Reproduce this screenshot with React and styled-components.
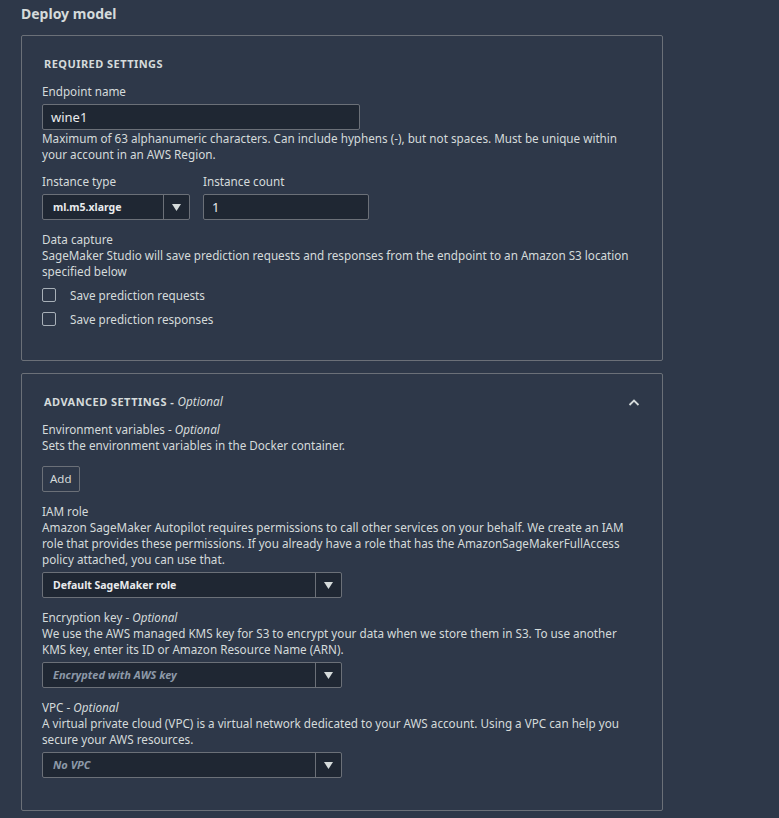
import React from "react";
import styled, { createGlobalStyle } from "styled-components";

const Global = createGlobalStyle`
  html, body { margin: 0; padding: 0; background: #2e3849; }
  body { font-family: "Noto Sans", "Open Sans", sans-serif; color: #d5dbdb; }
  * { box-sizing: border-box; }
`;

const Page = styled.div`
  padding: 4px 116px 8px 21px;
  min-height: 818px;
  background: #2e3849;
`;

const Title = styled.h1`
  margin: 0 0 11px;
  font-size: 14px;
  font-weight: 700;
  line-height: 20px;
  color: #d5dbdb;
`;

const Panel = styled.section`
  border: 1px solid #6b7078;
  border-radius: 2px;
  padding: 17px 20px ${(p) => p.$pb ?? 32}px 20px;
  margin-bottom: 12px;
  display: flex;
  flex-direction: column;
`;

const PanelHeader = styled.div`
  display: flex;
  align-items: center;
  justify-content: space-between;
  padding-left: 2px;
  margin-bottom: 10px;
  height: 20px;
`;

const PanelTitle = styled.h2`
  margin: 0;
  font-size: 11px;
  font-weight: 700;
  letter-spacing: 0.45px;
  text-transform: uppercase;
  color: #d5dbdb;
  em {
    font-size: 11.7px;
    font-weight: 400;
    text-transform: none;
    font-style: italic;
    letter-spacing: 0;
  }
`;

const Chevron = styled.svg`
  width: 12px;
  height: 12px;
  margin-right: 2px;
  margin-top: 3px;
`;

const Field = styled.div`
  display: flex;
  flex-direction: column;
  margin-bottom: ${(p) => p.$mb ?? 11}px;
`;

const Label = styled.div`
  font-size: 11.7px;
  line-height: 16px;
  color: #d5dbdb;
  em { font-style: italic; }
`;

const Help = styled.div`
  font-size: 11.7px;
  line-height: 16px;
  color: #d5dbdb;
`;

const TextInput = styled.div`
  width: ${(p) => p.$w}px;
  height: 26px;
  margin-top: 5px;
  background: #1f2733;
  border: 1px solid #6b7078;
  border-radius: 2px;
  padding: 0 8px;
  display: flex;
  align-items: center;
  font-size: 13px;
  line-height: 16px;
  color: #e9ebed;
`;

const Select = styled.div`
  width: ${(p) => p.$w}px;
  height: 26px;
  margin-top: 5px;
  background: #1f2733;
  border: 1px solid #6b7078;
  border-radius: 2px;
  display: flex;
  align-items: stretch;
`;

const SelectValue = styled.div`
  flex: 1;
  display: flex;
  align-items: center;
  padding-left: 10px;
  font-size: ${(p) => (p.$placeholder ? "11px" : "10.5px")};
  line-height: 16px;
  font-weight: 700;
  font-style: ${(p) => (p.$placeholder ? "italic" : "normal")};
  color: ${(p) => (p.$placeholder ? "#8d99a8" : "#e9ebed")};
`;

const SelectArrow = styled.div`
  width: 26px;
  border-left: 1px solid #6b7078;
  display: flex;
  align-items: center;
  justify-content: center;
`;

const Row = styled.div`
  display: flex;
  gap: 13px;
  margin-bottom: 11px;
`;

const CheckRow = styled.label`
  display: flex;
  align-items: center;
  gap: 14px;
  height: 16px;
  margin-top: 8px;
  font-size: 11.7px;
  line-height: 16px;
  color: #d5dbdb;
`;

const Box = styled.span`
  width: 14px;
  height: 14px;
  border: 1px solid #a8b0b8;
  border-radius: 2px;
  display: inline-block;
`;

const Button = styled.button`
  align-self: flex-start;
  height: 26px;
  margin-top: 13px;
  padding: 0 7px;
  background: transparent;
  border: 1px solid #6b7078;
  border-radius: 2px;
  color: #d5dbdb;
  font-family: inherit;
  font-size: 11.5px;
  line-height: 16px;
`;

const Arrow = () => (
  <svg width="9" height="7" viewBox="0 0 9 7">
    <path d="M0 0 H9 L4.5 7 Z" fill="#d5dbdb" />
  </svg>
);

export default function App() {
  return (
    <>
      <Global />
      <Page>
        <Title>Deploy model</Title>
        <Panel $pb={33}>
          <PanelHeader>
            <PanelTitle>Required settings</PanelTitle>
          </PanelHeader>
          <Field>
            <Label>Endpoint name</Label>
            <TextInput $w={318}>wine1</TextInput>
            <Help>
              Maximum of 63 alphanumeric characters. Can include hyphens (-), but not spaces. Must be unique within your account in an AWS Region.
            </Help>
          </Field>
          <Row>
            <Field $mb={0}>
              <Label>Instance type</Label>
              <Select $w={148}>
                <SelectValue>ml.m5.xlarge</SelectValue>
                <SelectArrow><Arrow /></SelectArrow>
              </Select>
            </Field>
            <Field $mb={0}>
              <Label>Instance count</Label>
              <TextInput $w={166}>1</TextInput>
            </Field>
          </Row>
          <Field $mb={0}>
            <Label>Data capture</Label>
            <Help>
              SageMaker Studio will save prediction requests and responses from the endpoint to an Amazon S3 location specified below
            </Help>
            <CheckRow><Box />Save prediction requests</CheckRow>
            <CheckRow><Box />Save prediction responses</CheckRow>
          </Field>
        </Panel>
        <Panel $pb={32}>
          <PanelHeader>
            <PanelTitle>
              Advanced settings - <em>Optional</em>
            </PanelTitle>
            <Chevron viewBox="0 0 12 12">
              <path d="M1.5 8 L6 3.5 L10.5 8" fill="none" stroke="#d5dbdb" strokeWidth="1.8" />
            </Chevron>
          </PanelHeader>
          <Field>
            <Label>Environment variables - <em>Optional</em></Label>
            <Help>Sets the environment variables in the Docker container.</Help>
            <Button>Add</Button>
          </Field>
          <Field>
            <Label>IAM role</Label>
            <Help>
              Amazon SageMaker Autopilot requires permissions to call other services on your behalf. We create an IAM role that provides these permissions. If you already have a role that has the AmazonSageMakerFullAccess policy attached, you can use that.
            </Help>
            <Select $w={300}>
              <SelectValue>Default SageMaker role</SelectValue>
              <SelectArrow><Arrow /></SelectArrow>
            </Select>
          </Field>
          <Field>
            <Label>Encryption key - <em>Optional</em></Label>
            <Help>
              We use the AWS managed KMS key for S3 to encrypt your data when we store them in S3. To use another KMS key, enter its ID or Amazon Resource Name (ARN).
            </Help>
            <Select $w={300}>
              <SelectValue $placeholder>Encrypted with AWS key</SelectValue>
              <SelectArrow><Arrow /></SelectArrow>
            </Select>
          </Field>
          <Field $mb={0}>
            <Label>VPC - <em>Optional</em></Label>
            <Help>
              A virtual private cloud (VPC) is a virtual network dedicated to your AWS account. Using a VPC can help you secure your AWS resources.
            </Help>
            <Select $w={300}>
              <SelectValue $placeholder>No VPC</SelectValue>
              <SelectArrow><Arrow /></SelectArrow>
            </Select>
          </Field>
        </Panel>
      </Page>
    </>
  );
}
